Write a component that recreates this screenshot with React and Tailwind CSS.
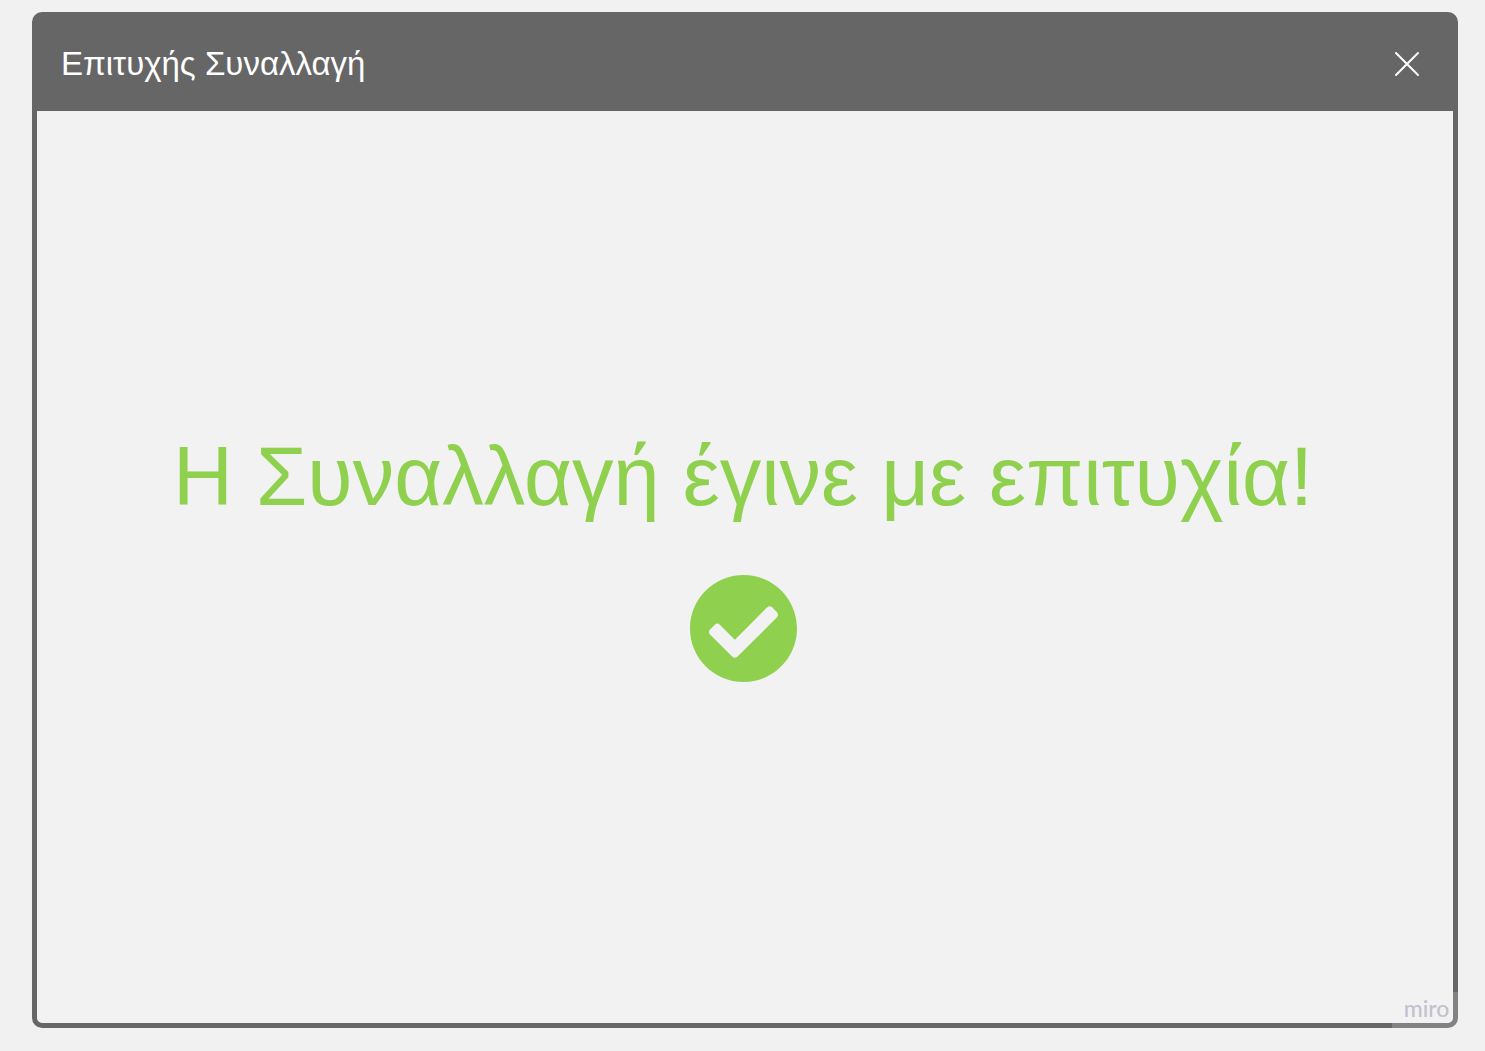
import React from "react";

function CheckCircle() {
  return (
    <svg
      role="img"
      aria-label="Επιτυχία"
      viewBox="8 8 496 496"
      className="size-[107px] fill-[#8fd14f]"
    >
      <path d="M504 256c0 136.967-111.033 248-248 248S8 392.967 8 256 119.033 8 256 8s248 111.033 248 248zM227.314 387.314l184-184c6.248-6.248 6.248-16.379 0-22.627l-22.627-22.627c-6.248-6.249-16.379-6.249-22.628 0L216 308.118l-70.059-70.059c-6.248-6.248-16.379-6.248-22.628 0l-22.627 22.627c-6.248 6.248-6.248 16.379 0 22.627l104 104c6.249 6.249 16.379 6.249 22.628.001z" />
    </svg>
  );
}

export default function App() {
  return (
    <div className="flex min-h-screen bg-[#f1f1f1] pt-3 pr-[27px] pb-[23px] pl-8 font-['Liberation_Sans',Arial,sans-serif]">
      <section
        role="dialog"
        aria-labelledby="dialog-title"
        className="relative flex min-w-0 flex-1 flex-col rounded-[10px] border-[5px] border-[#666666] bg-[#f2f2f2]"
      >
        <header className="flex h-[94px] shrink-0 items-center justify-between bg-[#666666] pr-8 pl-6">
          <h1 id="dialog-title" className="text-[33px] leading-[42px] text-white">
            Επιτυχής Συναλλαγή
          </h1>
          <button type="button" aria-label="Κλείσιμο" className="text-white">
            <svg
              viewBox="0 0 28 28"
              className="size-7 fill-none stroke-current stroke-2"
              strokeLinecap="round"
            >
              <path d="M3 3l22 22M25 3L3 25" />
            </svg>
          </button>
        </header>
        <main className="flex flex-1 flex-col items-center justify-center gap-[50px] pr-1 pb-6 text-center">
          <p className="text-[83px] leading-[96px] text-[#8fd14f]">
            Η Συναλλαγή έγινε με επιτυχία!
          </p>
          <CheckCircle />
        </main>
        <div className="absolute -right-2 -bottom-[5px] flex h-9 w-[69px] items-center justify-center bg-[#f5f5f5]/20 pb-1 font-['Lato',sans-serif] text-[23px] leading-none font-medium text-[#c3c1cd]">
          miro
        </div>
      </section>
    </div>
  );
}
